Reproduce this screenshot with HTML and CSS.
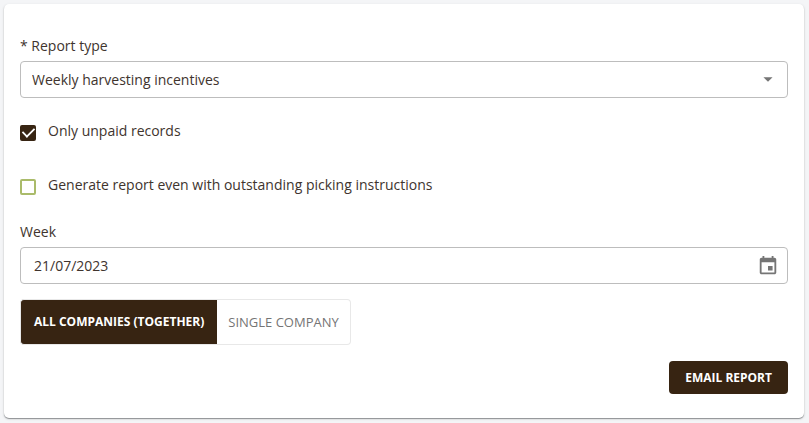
FILE: index.html
```html
<!DOCTYPE html>
<html lang="en">
<head>
<meta charset="utf-8">
<meta name="viewport" content="width=device-width, initial-scale=1">
<title>Report</title>
<link rel="stylesheet" href="styles.css">
</head>
<body>
<form class="card">
  <label class="label" for="type">* Report type</label>
  <div class="field">
    <select class="control" id="type"><option>Weekly harvesting incentives</option></select>
    <svg class="icon" viewBox="0 0 24 24" aria-hidden="true"><path d="M7 9l5 5 5-5z"/></svg>
  </div>
  <label class="check"><input type="checkbox" checked><span>Only unpaid records</span></label>
  <label class="check"><input type="checkbox"><span>Generate report even with outstanding picking instructions</span></label>
  <label class="label" for="week">Week</label>
  <div class="field">
    <input class="control date" id="week" type="text" value="21/07/2023">
    <button class="picker" type="button" aria-label="Choose date"><svg class="icon" viewBox="0 0 24 24" aria-hidden="true"><path d="M17 12h-5v5h5v-5zM16 1v2H8V1H6v2H5c-1.110 0-1.990.9-1.990 2L3 19c0 1.100.890 2 2 2h14c1.100 0 2-.9 2-2V5c0-1.100-.9-2-2-2h-1V1h-2zm3 18H5V8h14v11z"/></svg></button>
  </div>
  <div class="toggle">
    <button class="option selected" type="button" aria-pressed="true">All companies (together)</button>
    <button class="option" type="button" aria-pressed="false">Single company</button>
  </div>
  <div class="actions"><button class="submit" type="button">Email report</button></div>
</form>
</body>
</html>
```
FILE: styles.css
```css
* { box-sizing: border-box; }
body {
  margin: 0;
  padding: 4px 5px 4px 4px;
  background: #f4f5f7;
  color: #40342e;
  font: 14px/20px "Open Sans", sans-serif;
}
.card {
  display: flex;
  flex-direction: column;
  padding: 32px 16px 24px;
  border-radius: 5px;
  background: #fff;
  box-shadow: 0 1px 1px rgba(60, 64, 67, .5), 0 1px 3px rgba(60, 64, 67, .15);
}
.label { margin-bottom: 5px; }
.field {
  display: flex;
  align-items: center;
  height: 37px;
  padding-right: 8px;
  border: 1px solid #bdbdbd;
  border-radius: 4px;
}
.control {
  flex: 1;
  min-width: 0;
  height: 100%;
  padding: 0 11px;
  border: 0;
  outline: 0;
  appearance: none;
  background: none;
  color: inherit;
  font: inherit;
}
.date { padding: 0 13px; }
.icon { display: block; width: 22px; height: 22px; fill: #757575; }
.picker { padding: 0; border: 0; background: none; }
.check {
  display: flex;
  align-items: flex-start;
  gap: 12px;
  height: 20px;
  margin: 23px 0 11px;
}
.check input {
  display: grid;
  place-items: center;
  width: 16px;
  height: 16px;
  margin: 4px 0 0;
  border: 2px solid #aabb6a;
  border-radius: 2px;
  appearance: none;
}
.check input:checked { border-color: #372412; background: #372412; }
.check input:checked::after {
  content: "";
  width: 11px;
  height: 6px;
  border: solid #fff;
  border-width: 0 0 2px 2px;
  transform: translateY(-2px) rotate(-45deg) scale(.9);
}
.check + .label { margin-top: 16px; }
.toggle {
  display: flex;
  align-self: flex-start;
  margin: 15px 0 16px;
}
.option {
  height: 46px;
  padding: 0 11px;
  border: 1px solid #e8e8e8;
  border-left: 0;
  border-radius: 0 4px 4px 0;
  background: #fff;
  color: #757575;
  font: 400 13px/20px "Open Sans", sans-serif;
  text-transform: uppercase;
}
.option.selected {
  padding: 0 13px;
  border: 1px solid #e8e8e8;
  border-right: 0;
  border-radius: 4px 0 0 4px;
  background: #372412;
  color: #fff;
  font-size: 12px;
  font-weight: 700;
}
.actions { display: flex; justify-content: flex-end; }
.submit {
  height: 33px;
  padding: 0 16px;
  border: 0;
  border-radius: 4px;
  background: #372412;
  color: #fff;
  font: 700 12px/20px "Open Sans", sans-serif;
  text-transform: uppercase;
}
```
